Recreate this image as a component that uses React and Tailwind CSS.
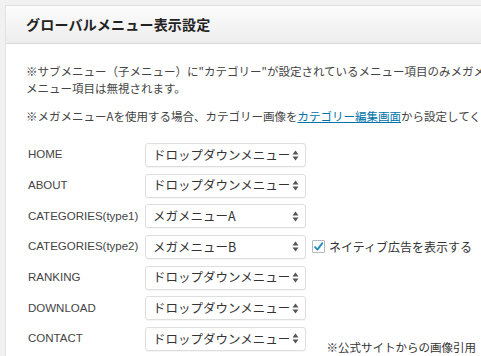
const jp = { fontFamily: '"Noto Sans CJK JP", "Liberation Sans", sans-serif' };
const lat = { fontFamily: '"Liberation Sans", "Noto Sans CJK JP", sans-serif' };

const rows = [
  { label: 'HOME', value: 'ドロップダウンメニュー' },
  { label: 'ABOUT', value: 'ドロップダウンメニュー' },
  { label: 'CATEGORIES(type1)', value: 'メガメニューA' },
  { label: 'CATEGORIES(type2)', value: 'メガメニューB', native: true },
  { label: 'RANKING', value: 'ドロップダウンメニュー' },
  { label: 'DOWNLOAD', value: 'ドロップダウンメニュー' },
  { label: 'CONTACT', value: 'ドロップダウンメニュー' },
];

const UpDown = () => (
  <svg width="7" height="11" viewBox="0 0 7 11" className="shrink-0">
    <path d="M3.5 0.5 L6.5 4.5 H0.5 Z" fill="#555" />
    <path d="M3.5 10.5 L6.5 6.5 H0.5 Z" fill="#555" />
  </svg>
);

const FakeSelect = ({ value }) => (
  <div className="w-[161px] h-[24px] border border-[#dedede] rounded-[3px] bg-white flex items-center pl-[7px] pr-[6px] shadow-[0_1px_1px_rgba(0,0,0,0.04)]">
    <span className="flex-1 text-[12.5px] text-[#333] whitespace-nowrap overflow-hidden" style={jp}>
      {value}
    </span>
    <UpDown />
  </div>
);

const Checkbox = () => (
  <div className="w-[13px] h-[13px] border border-[#b4b9be] bg-white rounded-[1px] flex items-center justify-center">
    <svg width="12" height="12" viewBox="0 0 12 12">
      <path d="M2.2 6.2 L4.8 8.8 L10.2 1.8" stroke="#1e8cbe" strokeWidth="2" fill="none" strokeLinecap="round" strokeLinejoin="round" />
    </svg>
  </div>
);

export default function App() {
  return (
    <div className="relative w-[481px] h-[356px] overflow-hidden bg-[#f1f1f1] pt-[5px] pl-[5px]">
      <div className="w-[520px] h-[400px] bg-white border-l border-t border-[#e2e2e2]">
        <div className="h-[38px] border-b border-[#dadada] bg-gradient-to-b from-[#fcfcfc] to-[#ededed] flex items-center pl-[20px]">
          <h1 className="text-[14px] font-bold text-[#222] tracking-[0.2px]" style={jp}>
            グローバルメニュー表示設定
          </h1>
        </div>

        <div className="pl-[20px] pt-[19px] text-[11.5px] text-[#444] leading-[17px]" style={jp}>
          <p className="whitespace-nowrap">
            ※サブメニュー（子メニュー）に"カテゴリー"が設定されているメニュー項目のみメガメニューとして表示され、それ以外の
          </p>
          <p className="whitespace-nowrap">メニュー項目は無視されます。</p>
          <p className="whitespace-nowrap mt-[11px]">
            ※メガメニューAを使用する場合、カテゴリー画像を
            <a className="text-[#0073aa] underline">カテゴリー編集画面</a>
            から設定してください。
          </p>
        </div>

        <div className="pl-[22px] pt-[18px] flex flex-col gap-[6.67px]">
          {rows.map((r) => (
            <div key={r.label} className="flex items-center h-[24px]">
              <div className="w-[117px] text-[11.5px] text-[#444]" style={lat}>
                {r.label}
              </div>
              <FakeSelect value={r.value} />
              {r.native && (
                <div className="flex items-center ml-[6px] gap-[4px]">
                  <Checkbox />
                  <span className="text-[12px] text-[#333]" style={jp}>
                    ネイティブ広告を表示する
                  </span>
                </div>
              )}
            </div>
          ))}
        </div>
      </div>

      <div className="absolute right-[3px] bottom-[0px] text-[11.5px] text-[#333] bg-white px-[2px]" style={jp}>
        ※公式サイトからの画像引用
      </div>
    </div>
  );
}
